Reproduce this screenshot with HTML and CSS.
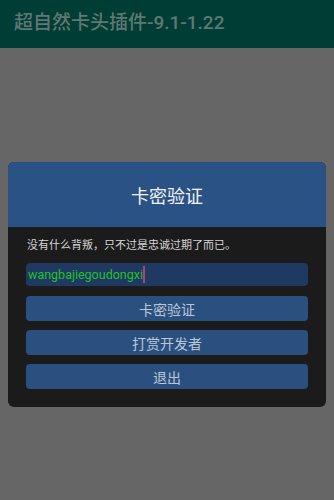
FILE: index.html
```html
<!DOCTYPE html>
<html>
<head>
<meta charset="utf-8">
<link rel="stylesheet" href="styles.css">
</head>
<body>
<div class="appbar">超自然卡头插件-9.1-1.22</div>
<div class="screen">
  <div class="dialog">
    <div class="dialog-head">卡密验证</div>
    <div class="dialog-body">
      <div class="desc">没有什么背叛，只不过是忠诚过期了而已。</div>
      <div class="input"><span class="value">wangbajiegoudongxi</span><span class="cursor"></span></div>
      <div class="btn">卡密验证</div>
      <div class="btn">打赏开发者</div>
      <div class="btn">退出</div>
    </div>
  </div>
</div>
</body>
</html>
```
FILE: styles.css
```css
html, body {
  margin: 0;
  padding: 0;
  width: 334px;
  height: 500px;
  overflow: hidden;
  background: #666666;
  font-family: Roboto, "Noto Sans CJK SC", sans-serif;
}
.appbar {
  height: 48px;
  background: #003d34;
  color: #5f7873;
  font-size: 19px;
  font-weight: 500;
  line-height: 46px;
  padding-left: 14px;
  box-sizing: border-box;
}
.screen {
  display: flex;
  flex-direction: column;
  padding: 114px 8px 0 8px;
}
.dialog {
  width: 318px;
  border-radius: 6px;
  overflow: hidden;
  background: #1b1b1b;
}
.dialog-head {
  height: 65px;
  background: #2b5285;
  color: #f4f6fa;
  font-size: 18px;
  display: flex;
  align-items: center;
  justify-content: center;
}
.dialog-body {
  padding: 11px 18px 18px 18px;
  display: flex;
  flex-direction: column;
}
.desc {
  color: #d6d6d6;
  font-size: 11px;
  line-height: 16px;
  padding-left: 1px;
  margin-bottom: 9px;
}
.input {
  height: 23px;
  background: #1f3a60;
  border-radius: 4px;
  display: flex;
  align-items: center;
  padding-left: 2px;
  margin-bottom: 10px;
}
.value {
  color: #22c02c;
  font-size: 12.5px;
}
.cursor {
  width: 2px;
  height: 17px;
  background: #b0407a;
}
.btn {
  height: 25px;
  background: #2a5080;
  border-radius: 4px;
  color: #bcc7d6;
  font-size: 14px;
  display: flex;
  align-items: center;
  justify-content: center;
  margin-bottom: 9px;
}
.btn:last-child {
  margin-bottom: 0;
}
```
